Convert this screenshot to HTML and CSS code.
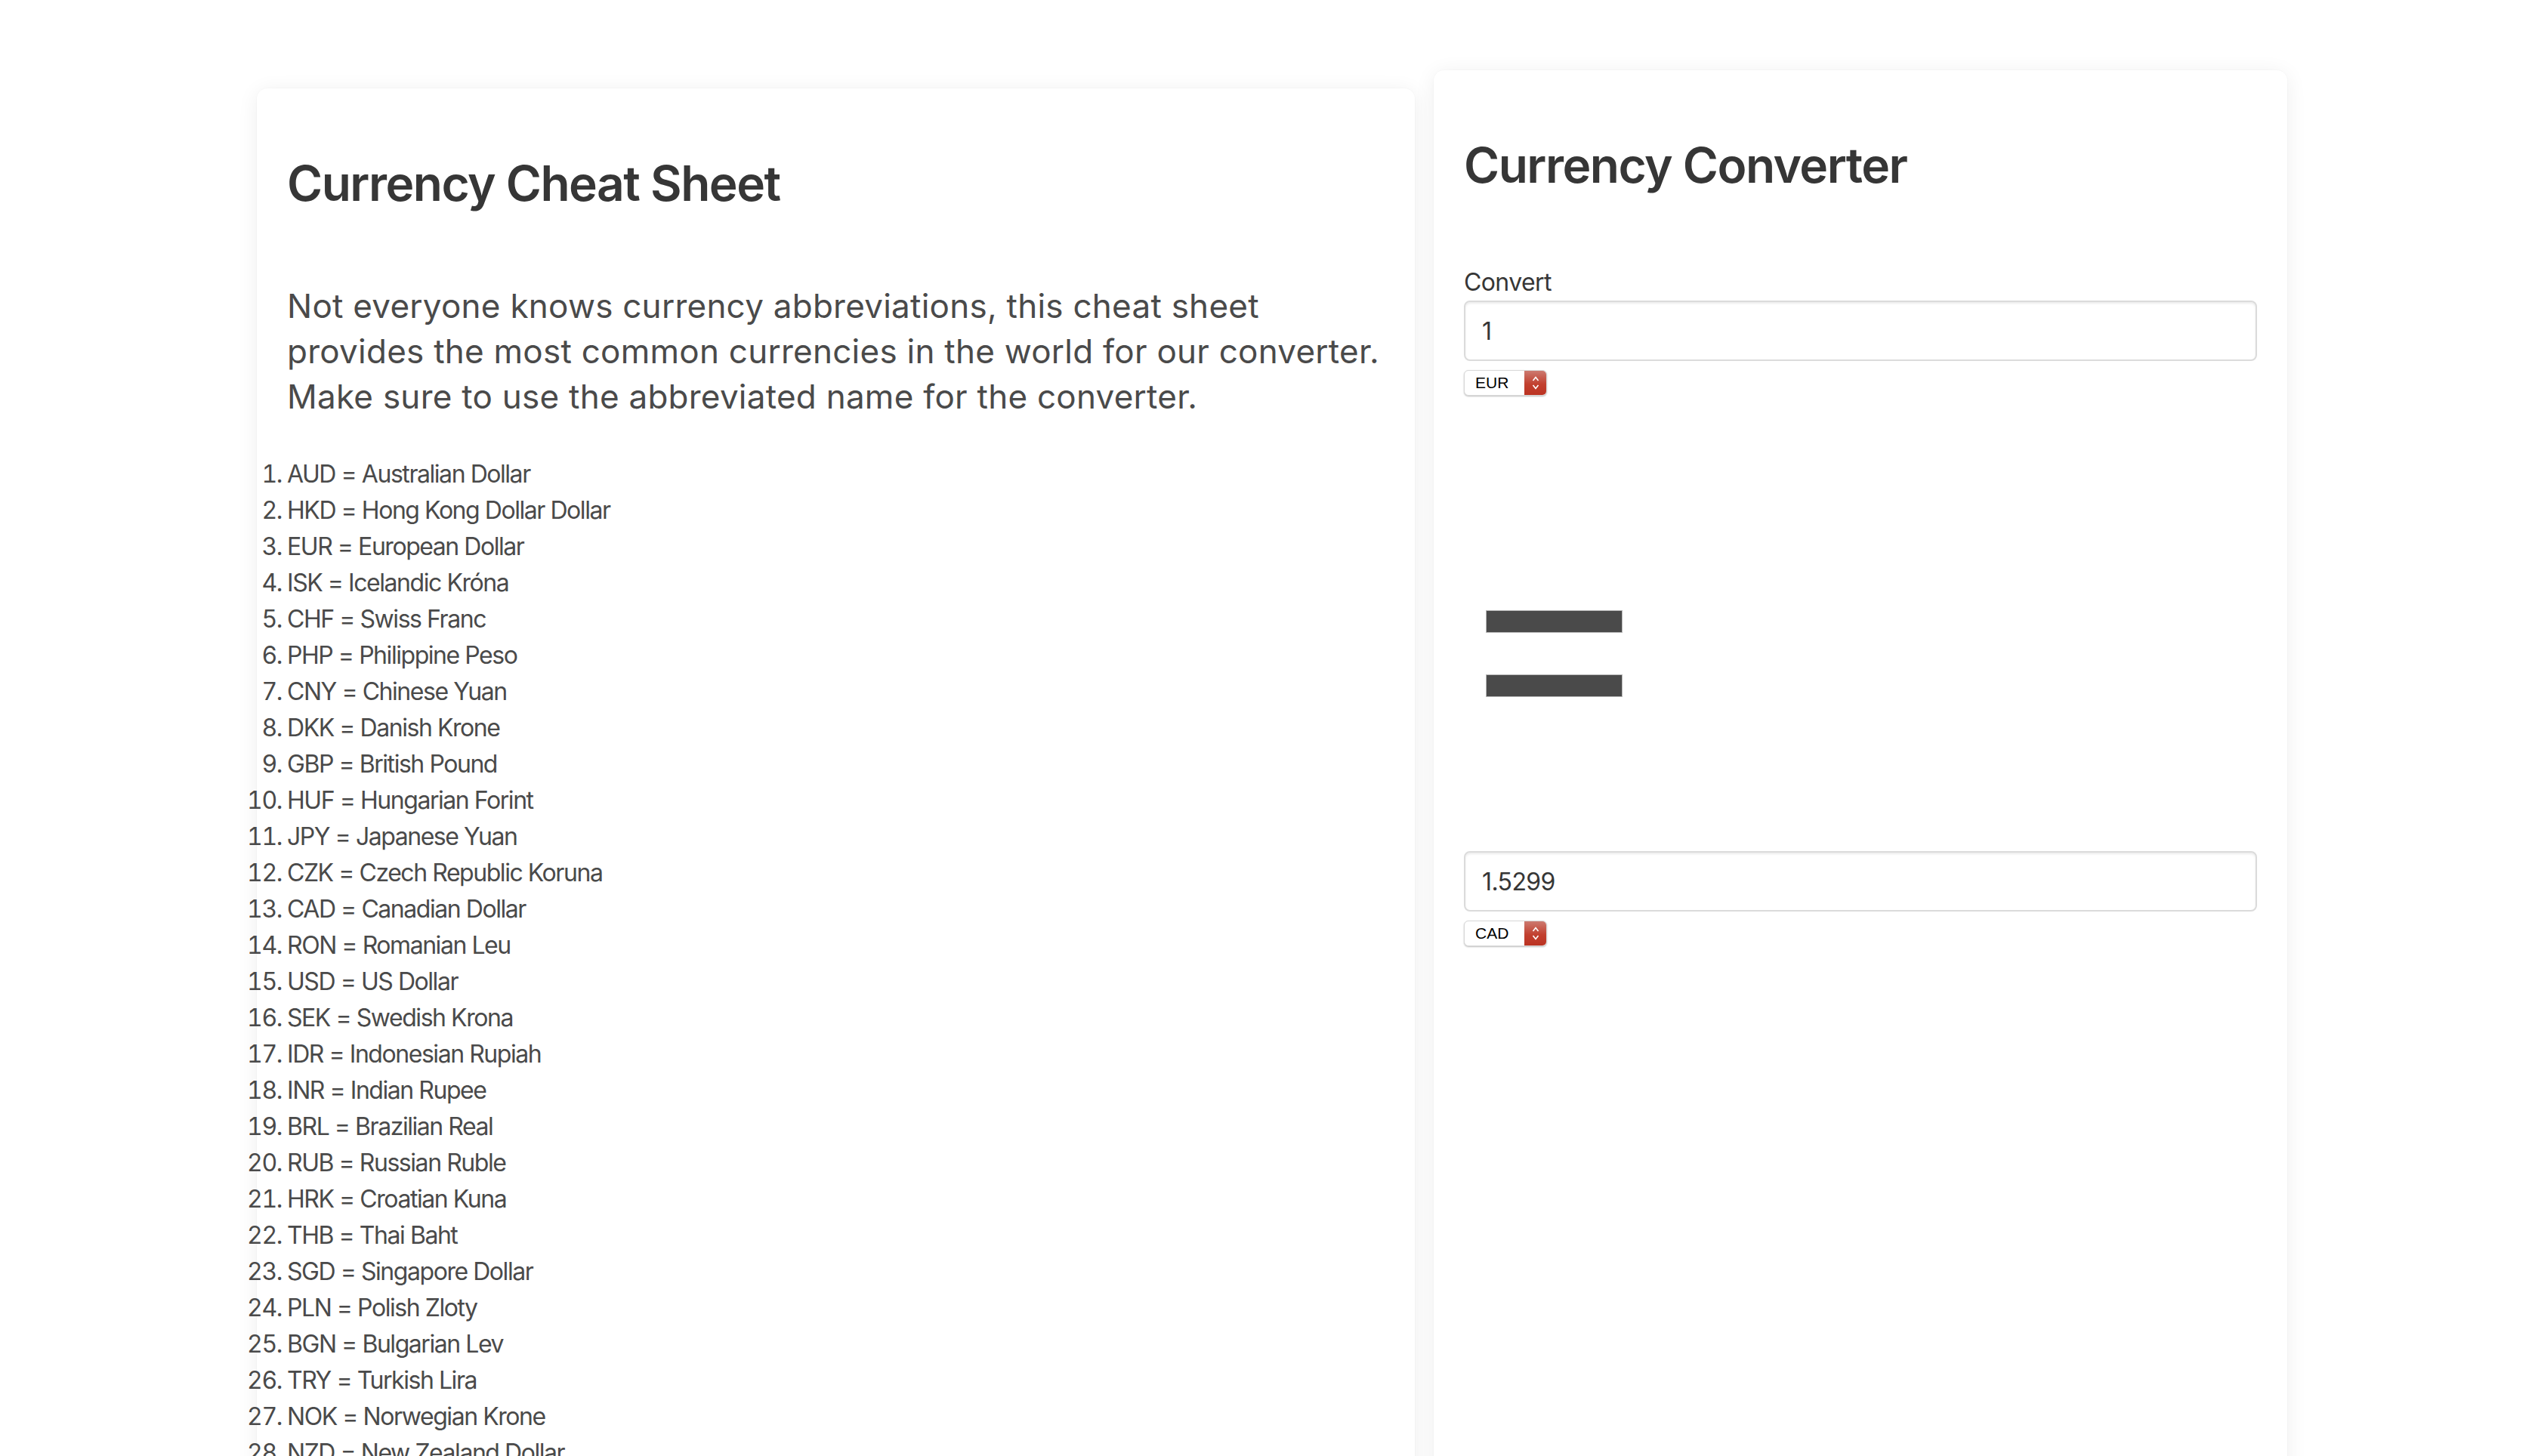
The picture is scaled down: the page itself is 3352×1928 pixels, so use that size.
FILE: index.html
```html
<!DOCTYPE html>
<html lang="en">
<head>
<meta charset="utf-8">
<title>Currency Converter</title>
<link rel="stylesheet" href="styles.css">
</head>
<body>
<div class="page">
  <section class="card cheat">
    <h1 class="title">Currency Cheat Sheet</h1>
    <p class="intro">Not everyone knows currency abbreviations, this cheat sheet provides the most common currencies in the world for our converter. Make sure to use the abbreviated name for the converter.</p>
    <ol class="list">
      <li>AUD = Australian Dollar</li>
      <li>HKD = Hong Kong Dollar Dollar</li>
      <li>EUR = European Dollar</li>
      <li>ISK = Icelandic Króna</li>
      <li>CHF = Swiss Franc</li>
      <li>PHP = Philippine Peso</li>
      <li>CNY = Chinese Yuan</li>
      <li>DKK = Danish Krone</li>
      <li>GBP = British Pound</li>
      <li>HUF = Hungarian Forint</li>
      <li>JPY = Japanese Yuan</li>
      <li>CZK = Czech Republic Koruna</li>
      <li>CAD = Canadian Dollar</li>
      <li>RON = Romanian Leu</li>
      <li>USD = US Dollar</li>
      <li>SEK = Swedish Krona</li>
      <li>IDR = Indonesian Rupiah</li>
      <li>INR = Indian Rupee</li>
      <li>BRL = Brazilian Real</li>
      <li>RUB = Russian Ruble</li>
      <li>HRK = Croatian Kuna</li>
      <li>THB = Thai Baht</li>
      <li>SGD = Singapore Dollar</li>
      <li>PLN = Polish Zloty</li>
      <li>BGN = Bulgarian Lev</li>
      <li>TRY = Turkish Lira</li>
      <li>NOK = Norwegian Krone</li>
      <li>NZD = New Zealand Dollar</li>
      <li>ZAR = South African Rand</li>
      <li>MXN = Mexican Peso</li>
    </ol>
  </section>

  <section class="card converter">
    <h1 class="title">Currency Converter</h1>
    <label class="label">Convert</label>
    <div class="input">1</div>
    <div class="select">
      <span class="select-text">EUR</span>
      <span class="select-arrows">
        <svg width="12" height="22" viewBox="0 0 12 22"><path d="M2.5 8 L6 3.5 L9.5 8" fill="none" stroke="#fff" stroke-width="1.6"/><path d="M2.5 14 L6 18.5 L9.5 14" fill="none" stroke="#fff" stroke-width="1.6"/></svg>
      </span>
    </div>
    <div class="equals">
      <div class="bar"></div>
      <div class="bar"></div>
    </div>
    <div class="input">1.5299</div>
    <div class="select">
      <span class="select-text">CAD</span>
      <span class="select-arrows">
        <svg width="12" height="22" viewBox="0 0 12 22"><path d="M2.5 8 L6 3.5 L9.5 8" fill="none" stroke="#fff" stroke-width="1.6"/><path d="M2.5 14 L6 18.5 L9.5 14" fill="none" stroke="#fff" stroke-width="1.6"/></svg>
      </span>
    </div>
  </section>
</div>
</body>
</html>
```

FILE: styles.css
```css
html, body {
  margin: 0;
  padding: 0;
  background: #ffffff;
  font-family: Inter, "Noto Sans", "DejaVu Sans", sans-serif;
  color: #4a4a4a;
  overflow: hidden;
  height: 1928px;
}

.page {
  display: flex;
  align-items: flex-start;
  gap: 25px;
  padding-left: 340px;
}

.card {
  background: #ffffff;
  border-radius: 14px;
  box-shadow: 0 4px 28px rgba(10, 10, 10, 0.07), 0 0 0 1px rgba(10, 10, 10, 0.015);
  box-sizing: border-box;
  padding: 40px 40px 40px 40px;
  height: 2400px;
}

.cheat {
  width: 1533px;
  margin-top: 117px;
}

.converter {
  width: 1130px;
  margin-top: 93px;
}

.title {
  margin: 50px 0 0 0;
  font-size: 64px;
  line-height: 72px;
  font-weight: 600;
  color: #363636;
  letter-spacing: -1.5px;
}

.intro {
  margin: 96px 0 0 0;
  font-size: 44px;
  line-height: 60px;
  font-weight: 400;
  color: #4a4a4a;
  letter-spacing: 0.25px;
}

.list {
  margin: 49px 0 0 0;
  padding: 0;
  list-style-position: outside;
  font-size: 32px;
  line-height: 48px;
  color: #4a4a4a;
  letter-spacing: -1.45px;
}

.label {
  display: block;
  margin-top: 95px;
  font-size: 32px;
  line-height: 48px;
  color: #363636;
  letter-spacing: -0.6px;
}

.input {
  box-sizing: border-box;
  height: 80px;
  border: 2px solid #dbdbdb;
  border-radius: 8px;
  box-shadow: inset 0 2px 3px rgba(10, 10, 10, 0.08);
  padding: 0 22px;
  display: flex;
  align-items: center;
  font-size: 32px;
  color: #363636;
  letter-spacing: -0.6px;
}

.select {
  margin-top: 12px;
  width: 110px;
  height: 34px;
  box-sizing: border-box;
  display: flex;
  border-radius: 6px;
  border: 1px solid #d8d8d8;
  box-shadow: 0 1px 2px rgba(0, 0, 0, 0.25);
  overflow: hidden;
  background: #ffffff;
}

.select-text {
  flex: 1;
  display: flex;
  align-items: center;
  padding-left: 14px;
  font-family: "Liberation Sans", Arial, sans-serif;
  font-size: 21px;
  color: #000000;
}

.select-arrows {
  width: 29px;
  display: flex;
  align-items: center;
  justify-content: center;
  background: linear-gradient(#cc7a70, #c2402f 55%, #bb3322);
}

.equals {
  margin: 284px 0 0 29px;
  height: 319px;
  display: flex;
  flex-direction: column;
  gap: 55px;
}

.bar {
  width: 181px;
  height: 30px;
  box-sizing: border-box;
  background: #4a4a4a;
  border: 1px solid #b8b8b8;
}
```
